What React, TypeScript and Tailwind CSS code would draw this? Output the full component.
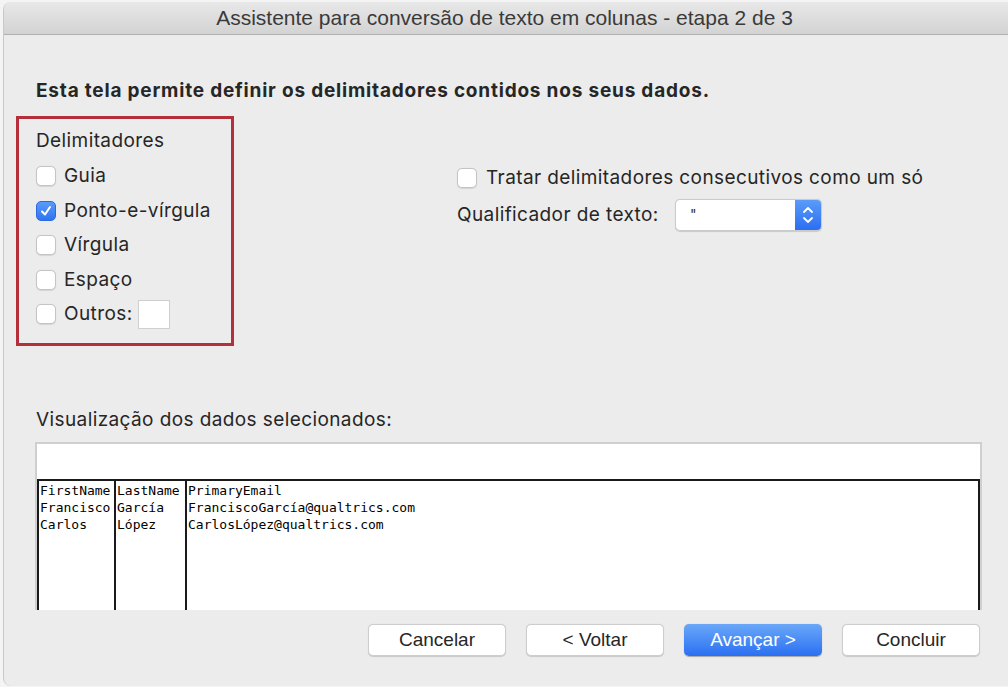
import React from "react";

const font = { fontFamily: "Inter, 'Liberation Sans', sans-serif" };

function Check({ checked = false }: { checked?: boolean }) {
  if (checked) {
    return (
      <div className="w-[20px] h-[20px] rounded-[5px] bg-gradient-to-b from-[#5a9bf8] to-[#2f74f0] border border-[#2a6ae0] flex items-center justify-center shrink-0">
        <svg width="14" height="14" viewBox="0 0 14 14">
          <path d="M3 7.5 L6 10.5 L11 3" stroke="white" strokeWidth="2" fill="none" strokeLinecap="round" strokeLinejoin="round" />
        </svg>
      </div>
    );
  }
  return <div className="w-[20px] h-[20px] rounded-[5px] bg-white border border-[#c4c4c4] shadow-[0_0.5px_1px_rgba(0,0,0,0.1)] shrink-0" />;
}

function Row({ label, checked, children }: { label: string; checked?: boolean; children?: React.ReactNode }) {
  return (
    <div className="flex items-center gap-[8px] h-[34.5px]">
      <Check checked={checked} />
      <span className="text-[19px] tracking-[0.4px] text-[#262626]">{label}</span>
      {children}
    </div>
  );
}

function Btn({ label, primary }: { label: string; primary?: boolean }) {
  return (
    <div
      className={
        primary
          ? "w-[138px] h-[32px] rounded-[5px] bg-gradient-to-b from-[#6aa7f8] to-[#2a6ff2] text-white flex items-center justify-center text-[19px] shadow-[0_0.5px_1px_rgba(0,0,0,0.3)]"
          : "w-[138px] h-[32px] rounded-[5px] bg-white border border-[#cdcdcd] text-[#262626] flex items-center justify-center text-[19px] shadow-[0_0.5px_1px_rgba(0,0,0,0.15)]"
      }
      style={{ fontFamily: "'Liberation Sans', sans-serif" }}
    >
      {label}
    </div>
  );
}

export default function App() {
  const mono = { fontFamily: "'DejaVu Sans Mono', monospace" };
  return (
    <div className="w-[1008px] h-[687px] bg-[#f4f4f4] pl-[3px] pt-[2px] overflow-hidden" style={font}>
      <div className="w-[1010px] h-[684px] bg-[#ececec] rounded-[8px] overflow-hidden flex flex-col border-l border-[#c8c8c8]">
        <div className="h-[33px] shrink-0 bg-gradient-to-b from-[#e8e8e8] to-[#d3d3d3] border-b border-[#b0b0b0] flex items-center justify-center">
          <span className="text-[21px] text-[#3a3a3a] pr-[8px]" style={{ fontFamily: "'Liberation Sans', sans-serif" }}>
            Assistente para conversão de texto em colunas - etapa 2 de 3
          </span>
        </div>
        <div className="flex-1 flex flex-col px-[12px]">
          <div className="pt-[45px] pl-[20px] text-[19px] tracking-[0.8px] font-bold text-[#262626] leading-[22px]">
            Esta tela permite definir os delimitadores contidos nos seus dados.
          </div>
          <div className="flex mt-[14px]">
            <div className="w-[218px] h-[230px] border-[3px] border-[#b52f3a] pl-[17px] pt-[7px]">
              <div className="text-[19px] tracking-[0.4px] text-[#262626] h-[33px] leading-[30px]">Delimitadores</div>
              <Row label="Guia" />
              <Row label="Ponto-e-vírgula" checked />
              <Row label="Vírgula" />
              <Row label="Espaço" />
              <Row label="Outros:">
                <div className="w-[32px] h-[29px] bg-white border border-[#cfcfcf] -ml-[3px]" />
              </Row>
            </div>
            <div className="ml-[223px] pt-[48px] flex flex-col">
              <div className="flex items-center gap-[9px]">
                <Check />
                <span className="text-[19px] tracking-[0.4px] text-[#262626]">Tratar delimitadores consecutivos como um só</span>
              </div>
              <div className="flex items-center mt-[6px]">
                <span className="text-[19px] tracking-[0.4px] text-[#262626] w-[218px] pt-[2px]">Qualificador de texto:</span>
                <div className="w-[147px] h-[32px] rounded-[5px] bg-white border border-[#cbcbcb] shadow-[0_0.5px_1px_rgba(0,0,0,0.15)] flex overflow-hidden">
                  <div className="flex-1 pl-[14px] flex items-center text-[14px] text-[#333]">"</div>
                  <div className="w-[26px] bg-gradient-to-b from-[#5b9bf8] to-[#2b6ef1] flex items-center justify-center">
                    <svg width="14" height="22" viewBox="0 0 14 22">
                      <path d="M3 8 L7 4 L11 8" stroke="white" strokeWidth="1.8" fill="none" strokeLinecap="round" strokeLinejoin="round" />
                      <path d="M3 14 L7 18 L11 14" stroke="white" strokeWidth="1.8" fill="none" strokeLinecap="round" strokeLinejoin="round" />
                    </svg>
                  </div>
                </div>
              </div>
            </div>
          </div>
          <div className="pl-[20px] mt-[62px] text-[19px] tracking-[0.4px] text-[#262626] leading-[24px]">Visualização dos dados selecionados:</div>
          <div className="ml-[19px] mt-[10px] w-[947px] h-[168px] bg-white border-2 border-[#cfcfcf] border-b-0 flex flex-col">
            <div className="h-[35px] shrink-0" />
            <div className="flex-1 border-2 border-b-0 border-[#1a1a1a] flex text-[13px] leading-[17px] text-black pt-[1px]" style={mono}>
              <div className="w-[77px] pl-[1px] border-r-2 border-[#1a1a1a] -mt-[1px] pt-[1px]">
                <div>FirstName</div>
                <div>Francisco</div>
                <div>Carlos</div>
              </div>
              <div className="w-[71px] pl-[1px] border-r-2 border-[#1a1a1a] -mt-[1px] pt-[1px]">
                <div>LastName</div>
                <div>García</div>
                <div>López</div>
              </div>
              <div className="flex-1 pl-[1px]">
                <div>PrimaryEmail</div>
                <div>FranciscoGarcía@qualtrics.com</div>
                <div>CarlosLópez@qualtrics.com</div>
              </div>
            </div>
          </div>
          <div className="flex justify-end gap-[20px] mt-[14px] pr-[21px]">
            <Btn label="Cancelar" />
            <Btn label="< Voltar" />
            <Btn label="Avançar >" primary />
            <Btn label="Concluir" />
          </div>
        </div>
      </div>
    </div>
  );
}
